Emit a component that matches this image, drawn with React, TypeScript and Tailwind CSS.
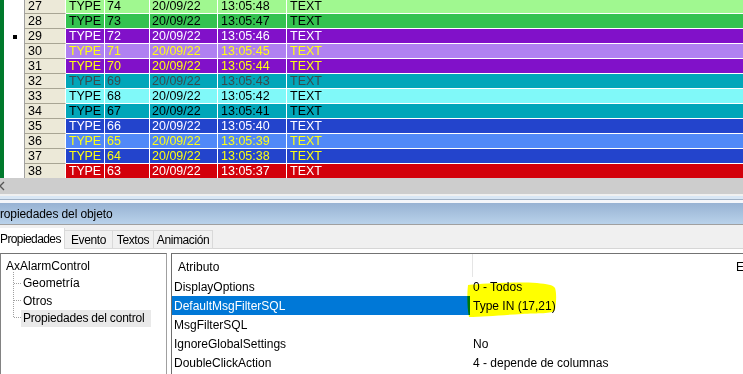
import React from 'react';

// Alarm grid rows
const alarmRows = [
  { n: 27, code: 74, time: '13:05:48', bg: 'bg-[#a0f890]', fg: 'text-black' },
  { n: 28, code: 73, time: '13:05:47', bg: 'bg-[#34c250]', fg: 'text-black' },
  { n: 29, code: 72, time: '13:05:46', bg: 'bg-[#8111c9]', fg: 'text-white', marker: true },
  { n: 30, code: 71, time: '13:05:45', bg: 'bg-[#b081f1]', fg: 'text-[#ffff10]' },
  { n: 31, code: 70, time: '13:05:44', bg: 'bg-[#8111c9]', fg: 'text-[#ffff10]' },
  { n: 32, code: 69, time: '13:05:43', bg: 'bg-[#01a6b9]', fg: 'text-[#3a4a4c]' },
  { n: 33, code: 68, time: '13:05:42', bg: 'bg-[#80f9f9]', fg: 'text-black' },
  { n: 34, code: 67, time: '13:05:41', bg: 'bg-[#01a6b9]', fg: 'text-black' },
  { n: 35, code: 66, time: '13:05:40', bg: 'bg-[#2344cc]', fg: 'text-white' },
  { n: 36, code: 65, time: '13:05:39', bg: 'bg-[#5189f8]', fg: 'text-[#ffff10]' },
  { n: 37, code: 64, time: '13:05:38', bg: 'bg-[#2344cc]', fg: 'text-[#ffff10]' },
  { n: 38, code: 63, time: '13:05:37', bg: 'bg-[#d3000a]', fg: 'text-white' },
];

const tabs = [
  { label: 'Evento', width: 'w-[48px]' },
  { label: 'Textos', width: 'w-[41px]' },
  { label: 'Animación', width: 'w-[59px]' },
];

const attributes = [
  { name: 'DisplayOptions', value: '0 - Todos' },
  { name: 'DefaultMsgFilterSQL', value: 'Type IN (17,21)', selected: true },
  { name: 'MsgFilterSQL', value: '' },
  { name: 'IgnoreGlobalSettings', value: 'No' },
  { name: 'DoubleClickAction', value: '4 - depende de columnas' },
];

export default function App() {
  return (
    <div className="w-[743px] h-[374px] overflow-hidden bg-white font-['Liberation_Sans',Arial,sans-serif]">
      {/* Alarm grid */}
      <div className="h-[178px] overflow-hidden text-[12.5px]">
        <div className="-mt-[1px]">
          {alarmRows.map((row) => (
            <div key={row.n} className="flex h-[15px]">
              <div className="w-[4px] bg-[#007a2c]"></div>
              <div className="w-[20px] flex items-center pl-[9px]">
                {row.marker && <div className="h-[4px] w-[4px] bg-black"></div>}
              </div>
              <div className="w-[1px] bg-[#a0a0a0]"></div>
              <div className="w-[41px] box-border border-r border-b border-r-white border-b-[#a8a594] bg-[#ece9d8] pl-[3px] leading-[14px] text-black">
                {row.n}
              </div>
              <div className={`flex flex-1 ${row.bg} ${row.fg} leading-[14px] whitespace-nowrap`}>
                <div className="w-[39px] box-border border-r border-b border-white pl-[3px] tracking-[-0.2px]">TYPE</div>
                <div className="w-[45px] box-border border-r border-b border-white pl-[2px]">{row.code}</div>
                <div className="w-[68px] box-border border-r border-b border-white pl-[2px]">20/09/22</div>
                <div className="w-[69px] box-border border-r border-b border-white pl-[3px]">{row.time}</div>
                <div className="flex-1 box-border border-b border-white pl-[3px]">TEXT</div>
              </div>
            </div>
          ))}
        </div>
      </div>

      {/* Horizontal scrollbar */}
      <div className="flex h-[16px] items-center bg-[#cdcdcd]">
        <svg width="6" height="16" viewBox="0 0 6 16">
          <path d="M4 4 L0 8 L4 12" stroke="#555" strokeWidth="1.3" fill="none" />
        </svg>
      </div>
      <div className="h-[2px] bg-[#f0f0f0]"></div>
      <div className="h-[3px] bg-[#d9e7f5]"></div>
      <div className="h-[1px] bg-[#9fb1c6]"></div>
      <div className="h-[3px] bg-[#f4f6fa]"></div>

      {/* Object properties title */}
      <div className="flex h-[21px] items-center bg-gradient-to-b from-[#97b2d3] to-[#b9d2ea] text-[12px] text-black whitespace-nowrap">
        <span className="-ml-[8px] tracking-[-0.1px]">Propiedades del objeto</span>
      </div>
      <div className="h-[1px] bg-[#a0a0a0]"></div>

      {/* Tabs */}
      <div className="flex h-[24px] items-end bg-[#f0f0f0] text-[12px] text-black whitespace-nowrap">
        <div className="flex h-[21px] w-[65px] items-center overflow-hidden border-r border-[#d9d9d9] bg-white">
          <span className="tracking-[-0.6px]">Propiedades</span>
        </div>
        {tabs.map((tab) => (
          <div
            key={tab.label}
            className={`flex h-[19px] ${tab.width} items-center justify-center box-border border-t border-r border-b border-[#d9d9d9] pt-[1px] tracking-[-0.4px]`}
          >
            {tab.label}
          </div>
        ))}
        <div className="h-[19px] flex-1 box-border border-b border-[#d6d6d6]"></div>
      </div>
      <div className="h-[4px] bg-white"></div>

      {/* Panels */}
      <div className="flex h-[121px] text-[12px] text-black whitespace-nowrap">
        {/* Tree */}
        <div className="relative w-[167px] box-border border-t border-l border-r border-t-[#737373] border-l-[#828282] border-r-[#a0a0a0] bg-white pt-[3px]">
          <svg className="absolute left-0 top-0" width="30" height="80">
            <g stroke="#a0a0a0" strokeWidth="1" strokeDasharray="1 1">
              <line x1="12.5" y1="18" x2="12.5" y2="64" />
              <line x1="13" y1="29.5" x2="21" y2="29.5" />
              <line x1="13" y1="46.5" x2="21" y2="46.5" />
              <line x1="13" y1="63.5" x2="21" y2="63.5" />
            </g>
          </svg>
          <div className="flex h-[17.5px] items-center pl-[5px]">AxAlarmControl</div>
          <div className="flex h-[17.5px] items-center pl-[22px]">Geometría</div>
          <div className="flex h-[17.5px] items-center pl-[22px]">Otros</div>
          <div className="flex h-[17.5px] items-center pl-[20px]">
            <span className="w-[130px] bg-[#e9e9e9] px-[2px] leading-[17px] tracking-[-0.2px]">Propiedades del control</span>
          </div>
        </div>

        <div className="w-[4px] bg-white"></div>

        {/* Attribute list */}
        <div className="relative flex-1 box-border border-t border-l border-t-[#737373] border-l-[#6e6e6e] bg-white">
          <div className="flex h-[23px] items-center">
            <div className="w-[300px] pl-[6px] pt-[3px]">Atributo</div>
            <div className="h-full w-[1px] bg-[#e5e5e5]"></div>
            <div className="flex-1"></div>
            <div className="w-[7px] overflow-hidden pt-[3px]">E</div>
          </div>
          {attributes.map((attr) => (
            <div key={attr.name} className="flex h-[19px] items-center">
              <div
                className={`flex h-full w-[298px] items-center pl-[2px] ${
                  attr.selected ? 'bg-[#0078d7] text-white' : ''
                }`}
              >
                {attr.name}
              </div>
              <div className="pl-[3px]">{attr.value}</div>
            </div>
          ))}
          {/* Yellow highlighter mark */}
          <svg
            className="absolute left-[295px] top-[28px] mix-blend-multiply"
            width="92"
            height="38"
            viewBox="0 0 92 38"
          >
            <path
              d="M1 3 C20 1 50 0 70 1 C80 2 86 3 88 6 C90 12 89 22 88 28 C86 32 70 31 55 32 C35 33 15 35 2 35 C0 25 0 12 1 3 Z"
              fill="#ffff00"
            />
          </svg>
        </div>
      </div>
    </div>
  );
}
